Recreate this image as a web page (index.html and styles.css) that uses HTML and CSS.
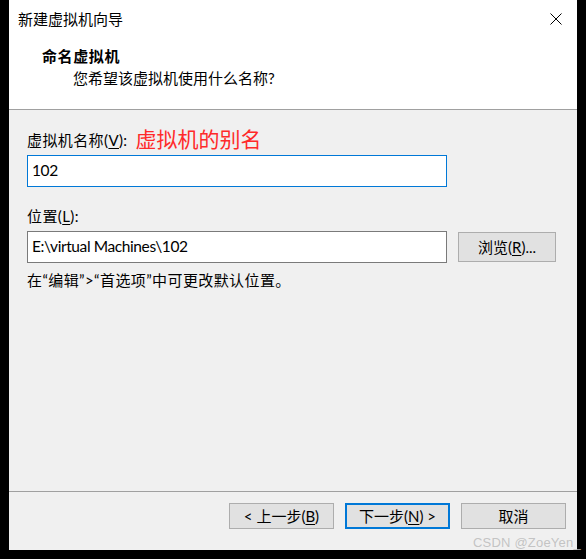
FILE: index.html
```html
<!DOCTYPE html>
<html lang="zh-CN">
<head>
<meta charset="utf-8">
<title>新建虚拟机向导</title>
<link rel="stylesheet" href="styles.css">
</head>
<body>
<div class="window">
  <div class="top">
    <div class="titlebar">
      <span class="title">新建虚拟机向导</span>
      <svg class="close" width="12" height="12" viewBox="0 0 12 12"><path d="M0.5 0.5 L11.5 11.5 M11.5 0.5 L0.5 11.5" stroke="#000" stroke-width="1" fill="none"/></svg>
    </div>
    <div class="h-title">命名虚拟机</div>
    <div class="h-sub">您希望该虚拟机使用什么名称?</div>
  </div>
  <div class="content">
    <div class="label-row"><span class="label">虚拟机名称(<u>V</u>):</span><span class="note-red">虚拟机的别名</span></div>
    <div class="input focused">102</div>
    <div class="label-row second"><span class="label">位置(<u>L</u>):</span></div>
    <div class="path-row">
      <div class="input">E:\virtual Machines\102</div>
      <div class="btn browse">浏览(<u>R</u>)...</div>
    </div>
    <div class="hint">在<span class="q">“</span>编辑<span class="q">”</span>&gt;<span class="q">“</span>首选项<span class="q">”</span>中可更改默认位置。</div>
  </div>
  <div class="footer">
    <div class="btn nav">&lt; 上一步(<u>B</u>)</div>
    <div class="btn nav default">下一步(<u>N</u>) &gt;</div>
    <div class="btn nav">取消</div>
  </div>
</div>
<div class="watermark">CSDN @ZoeYen_</div>
</body>
</html>
```
FILE: styles.css
```css
html, body {
  margin: 0;
  padding: 0;
  background: #000;
}
body {
  width: 586px;
  height: 559px;
  position: relative;
  overflow: hidden;
  font-family: Lato, "Noto Sans CJK SC", sans-serif;
  font-size: 15px;
  color: #000;
}
.window {
  margin-left: 9px;
  width: 568px;
  height: 550px;
  background: #f0f0f0;
  display: flex;
  flex-direction: column;
}
.top {
  background: #fff;
  height: 109px;
  border-bottom: 1px solid #a0a0a0;
}
.titlebar {
  height: 38px;
  display: flex;
  align-items: center;
  justify-content: space-between;
  padding: 0 15px 0 9px;
}
.title {
  line-height: 20px;
}
.close {
  display: block;
  margin-top: -1px;
}
.h-title {
  font-weight: bold;
  line-height: 20px;
  margin-top: 8px;
  padding-left: 33px;
  letter-spacing: 0.6px;
}
.h-sub {
  line-height: 20px;
  margin-top: 2px;
  padding-left: 64px;
}
.content {
  flex: 1;
  padding: 20px 0 0 18px;
}
.label-row {
  height: 20px;
  display: flex;
  align-items: center;
  margin-bottom: 5px;
}
.label-row.second {
  margin-top: 19px;
}
.label {
  line-height: 20px;
  letter-spacing: 0.4px;
}
.note-red {
  color: #ff2a2a;
  font-size: 21px;
  line-height: 20px;
  margin-left: 8px;
  margin-top: -2px;
}
.input {
  box-sizing: border-box;
  width: 420px;
  height: 32px;
  background: #fff;
  border: 1px solid #7a7a7a;
  padding: 0 0 3px 4px;
  display: flex;
  align-items: center;
  line-height: 20px;
  font-size: 15.5px;
  letter-spacing: -0.4px;
}
.input.focused {
  border-color: #0078d7;
}
.path-row {
  display: flex;
  align-items: center;
  gap: 11px;
}
.btn {
  box-sizing: border-box;
  background: #e1e1e1;
  border: 1px solid #adadad;
  display: flex;
  align-items: center;
  justify-content: center;
  line-height: 20px;
}
.browse {
  width: 98px;
  height: 30px;
}
.hint {
  margin-top: 7px;
  line-height: 20px;
  letter-spacing: 0.4px;
}
.q {
  font-family: Lato, sans-serif;
}
.footer {
  height: 47px;
  border-top: 1px solid #a0a0a0;
  display: flex;
  justify-content: flex-end;
  align-items: flex-start;
  gap: 11px;
  padding: 11px 11px 0 0;
}
.nav {
  width: 105px;
  height: 26px;
}
.nav.default {
  border: 2px solid #0078d7;
}
u {
  text-decoration: underline;
  text-underline-offset: 2px;
}
.watermark {
  position: absolute;
  left: 473px;
  top: 535px;
  font-family: "Liberation Sans", Arial, sans-serif;
  font-size: 13px;
  line-height: 15px;
  color: rgba(190, 190, 190, 0.9);
  letter-spacing: 0.2px;
}
```
